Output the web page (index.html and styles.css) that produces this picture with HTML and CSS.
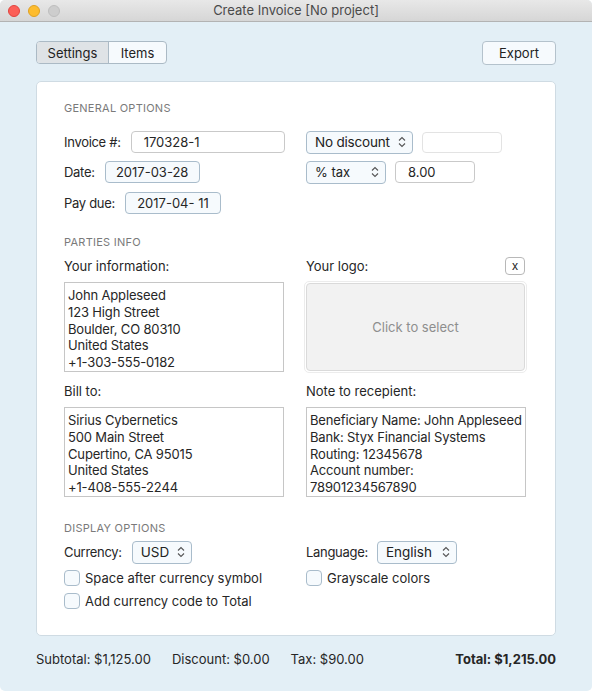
FILE: index.html
```html
<!DOCTYPE html>
<html>
<head>
<meta charset="utf-8">
<link rel="stylesheet" href="styles.css">
</head>
<body>
<div class="window">
  <div class="titlebar">
    <div class="lights">
      <span class="light red"></span>
      <span class="light yellow"></span>
      <span class="light gray"></span>
    </div>
    <div class="title">Create Invoice [No project]</div>
  </div>
  <div class="content">
    <div class="toolbar">
      <div class="segmented">
        <span class="seg seg-on">Settings</span>
        <span class="seg">Items</span>
      </div>
      <button class="btn export">Export</button>
    </div>

    <div class="card">
      <div class="heading">GENERAL OPTIONS</div>
      <div class="general">
        <div class="gcol">
          <div class="row">
            <span class="label">Invoice #:</span>
            <span class="field invoice">170328-1</span>
          </div>
          <div class="row">
            <span class="label">Date:</span>
            <span class="datebox date1">2017-03-28</span>
          </div>
          <div class="row row3">
            <span class="label">Pay due:</span>
            <span class="datebox date2">2017-04- 11</span>
          </div>
        </div>
        <div class="gcol">
          <div class="row row-r">
            <span class="popup pop-discount">No discount<svg class="chev" viewBox="0 0 8 14"><path d="M1 5.5L4 2.5L7 5.5M1 8.5L4 11.5L7 8.5"/></svg></span>
            <span class="field field-empty"></span>
          </div>
          <div class="row row-r">
            <span class="popup pop-tax">% tax<svg class="chev" viewBox="0 0 8 14"><path d="M1 5.5L4 2.5L7 5.5M1 8.5L4 11.5L7 8.5"/></svg></span>
            <span class="field tax">8.00</span>
          </div>
        </div>
      </div>

      <div class="heading parties-h">PARTIES INFO</div>
      <div class="parties">
        <div class="pcell">
          <div class="plabel">Your information:</div>
          <div class="textarea">John Appleseed<br>123 High Street<br>Boulder, CO 80310<br>United States<br>+1-303-555-0182</div>
        </div>
        <div class="pcell">
          <div class="plabel logo-label"><span>Your logo:</span><span class="xbtn">x</span></div>
          <div class="logo-wrap"><div class="logo">Click to select</div></div>
        </div>
        <div class="pcell">
          <div class="plabel">Bill to:</div>
          <div class="textarea">Sirius Cybernetics<br>500 Main Street<br>Cupertino, CA 95015<br>United States<br>+1-408-555-2244</div>
        </div>
        <div class="pcell">
          <div class="plabel">Note to recepient:</div>
          <div class="textarea">Beneficiary Name: John Appleseed<br>Bank: Styx Financial Systems<br>Routing: 12345678<br>Account number:<br>78901234567890</div>
        </div>
      </div>

      <div class="heading display-h">DISPLAY OPTIONS</div>
      <div class="display">
        <div class="dcol">
          <div class="row">
            <span class="label">Currency:</span>
            <span class="popup pop-cur">USD<svg class="chev" viewBox="0 0 8 14"><path d="M1 5.5L4 2.5L7 5.5M1 8.5L4 11.5L7 8.5"/></svg></span>
          </div>
          <div class="check"><span class="box"></span>Space after currency symbol</div>
          <div class="check"><span class="box"></span>Add currency code to Total</div>
        </div>
        <div class="dcol">
          <div class="row row-lang">
            <span class="label">Language:</span>
            <span class="popup pop-lang">English<svg class="chev" viewBox="0 0 8 14"><path d="M1 5.5L4 2.5L7 5.5M1 8.5L4 11.5L7 8.5"/></svg></span>
          </div>
          <div class="check"><span class="box"></span>Grayscale colors</div>
        </div>
      </div>
    </div>

    <div class="totals">
      <span class="t-sub">Subtotal: $1,125.00</span>
      <span class="t-disc">Discount: $0.00</span>
      <span class="t-tax">Tax: $90.00</span>
      <span class="t-total">Total: $1,215.00</span>
    </div>
  </div>
</div>
</body>
</html>
```

FILE: styles.css
```css
* { box-sizing: border-box; }
html, body { margin: 0; padding: 0; background: #ffffff; }
body {
  width: 592px;
  height: 691px;
  font-family: "Inter", "Helvetica Neue", sans-serif;
  font-size: 13px;
  color: #262626;
}
.window {
  width: 592px;
  height: 691px;
  background: #e3eff6;
  border-radius: 5px;
  overflow: hidden;
  display: flex;
  flex-direction: column;
}
.titlebar {
  height: 22px;
  flex: none;
  background: linear-gradient(#e8e8e8, #d6d6d6);
  border-bottom: 1px solid #b3b3b3;
  display: flex;
  align-items: center;
  position: relative;
}
.lights {
  display: flex;
  gap: 8px;
  padding-left: 8px;
}
.light {
  width: 12px;
  height: 12px;
  border-radius: 50%;
  display: block;
}
.red { background: #fc5f57; border: 1px solid #e0443e; }
.yellow { background: #fdbc2e; border: 1px solid #dea123; }
.gray { background: #cdcdcd; border: 1px solid #bdbdbd; }
.title {
  position: absolute;
  left: 0;
  right: 0;
  top: 0;
  line-height: 21px;
  text-align: center;
  color: #4a4a4a;
  font-size: 13px;
}
.content {
  padding: 19px 36px 0;
  flex: 1;
}
.toolbar {
  display: flex;
  justify-content: space-between;
  align-items: flex-start;
  height: 40px;
}
.segmented {
  display: flex;
  height: 23px;
  border: 1px solid #abbac5;
  border-radius: 4px;
  overflow: hidden;
  background: #f6fafd;
}
.seg {
  display: flex;
  align-items: center;
  justify-content: center;
  color: #222;
}
.seg-on {
  width: 72px;
  background: #dfe3e6;
  border-right: 1px solid #abbac5;
}
.seg:last-child { width: 57px; }
.btn {
  font: inherit;
  color: #222;
  background: #f6fafd;
  border: 1px solid #b4c2cc;
  border-radius: 4px;
  height: 24px;
  padding: 0;
}
.export { width: 74px; }

.card {
  background: #ffffff;
  border: 1px solid #cfdbe3;
  border-radius: 5px;
  height: 555px;
  padding: 19px 28px 0 27px;
}
.heading {
  font-size: 11px;
  line-height: 14px;
  color: #7a7a7a;
  letter-spacing: 0.25px;
}
.general {
  margin-top: 16px;
  display: grid;
  grid-template-columns: 220px 221px;
  column-gap: 22px;
}
.gcol { display: flex; flex-direction: column; gap: 8px; }
.row {
  display: flex;
  align-items: center;
  height: 22px;
  gap: 10px;
}
.row3 { margin-top: 1px; }
.row-r { gap: 9px; }
.row-lang { gap: 9px; }
.label { color: #262626; white-space: nowrap; flex: none; letter-spacing: -0.3px; }
.field {
  height: 22px;
  border: 1px solid #c9c9c9;
  border-radius: 4px;
  background: #fff;
  display: flex;
  align-items: center;
  padding-left: 12px;
  flex: none;
}
.invoice { width: 154px; }
.field-empty { width: 80px; border-color: #e3e3e3; height: 21px; }
.tax { width: 80px; }
.datebox {
  height: 22px;
  border: 1px solid #a9bccb;
  border-radius: 4px;
  background: #f6fafd;
  display: flex;
  align-items: center;
  justify-content: center;
  flex: none;
}
.date1 { width: 95px; }
.date2 { width: 96px; }
.popup {
  height: 23px;
  border: 1px solid #a9bccb;
  border-radius: 4px;
  background: #f6fafd;
  display: flex;
  align-items: center;
  justify-content: space-between;
  padding: 0 6px 0 8px;
  color: #222;
  flex: none;
  white-space: nowrap;
}
.chev {
  width: 8px;
  height: 14px;
  flex: none;
}
.chev path {
  fill: none;
  stroke: #555;
  stroke-width: 1.1;
}
.pop-discount { width: 107px; font-size: 13.5px; letter-spacing: -0.2px; }
.pop-tax { width: 80px; }
.pop-cur { width: 60px; font-size: 13.5px; }
.pop-lang { width: 80px; font-size: 13.5px; }

.parties-h { margin-top: 21px; }
.parties {
  margin-top: 9px;
  display: grid;
  grid-template-columns: 221px 221px;
  column-gap: 21px;
  row-gap: 10px;
}
.plabel {
  height: 16px;
  line-height: 16px;
  margin-bottom: 8px;
  white-space: nowrap;
}
.logo-label {
  display: flex;
  justify-content: space-between;
  align-items: center;
}
.xbtn {
  width: 20px;
  height: 18px;
  border: 1px solid #b8b8b8;
  border-radius: 4px;
  font-size: 12px;
  line-height: 15px;
  text-align: center;
  margin-right: 2px;
  margin-top: -1px;
}
.textarea {
  height: 90px;
  width: 220px;
  border: 1px solid #c6c6c6;
  padding: 4px 3px 0;
  line-height: 16.8px;
  letter-spacing: -0.15px;
  white-space: nowrap;
  overflow: hidden;
  color: #262626;
}
.logo-wrap {
  height: 92px;
  margin: -1px 0 0 -2px;
  border: 1px solid #ececec;
  border-radius: 5px;
  padding: 1px;
}
.logo {
  height: 100%;
  background: #f2f2f2;
  border: 1px solid #dadada;
  border-radius: 4px;
  display: flex;
  align-items: center;
  justify-content: center;
  color: #8e8e8e;
}
.display-h { margin-top: 24px; }
.display {
  margin-top: 6px;
  display: grid;
  grid-template-columns: 221px 221px;
  column-gap: 21px;
}
.dcol { display: flex; flex-direction: column; gap: 7px; }
.dcol .row { height: 22px; }
.check {
  display: flex;
  align-items: center;
  height: 16px;
  gap: 5px;
  white-space: nowrap;
}
.box {
  width: 16px;
  height: 16px;
  border: 1px solid #a9bccb;
  border-radius: 4px;
  background: #f6fafd;
  flex: none;
}
.totals {
  display: flex;
  align-items: center;
  height: 46px;
}
.t-sub { margin-right: 21px; }
.t-disc { margin-right: 21px; }
.t-total { margin-left: auto; font-weight: 700; }
```
